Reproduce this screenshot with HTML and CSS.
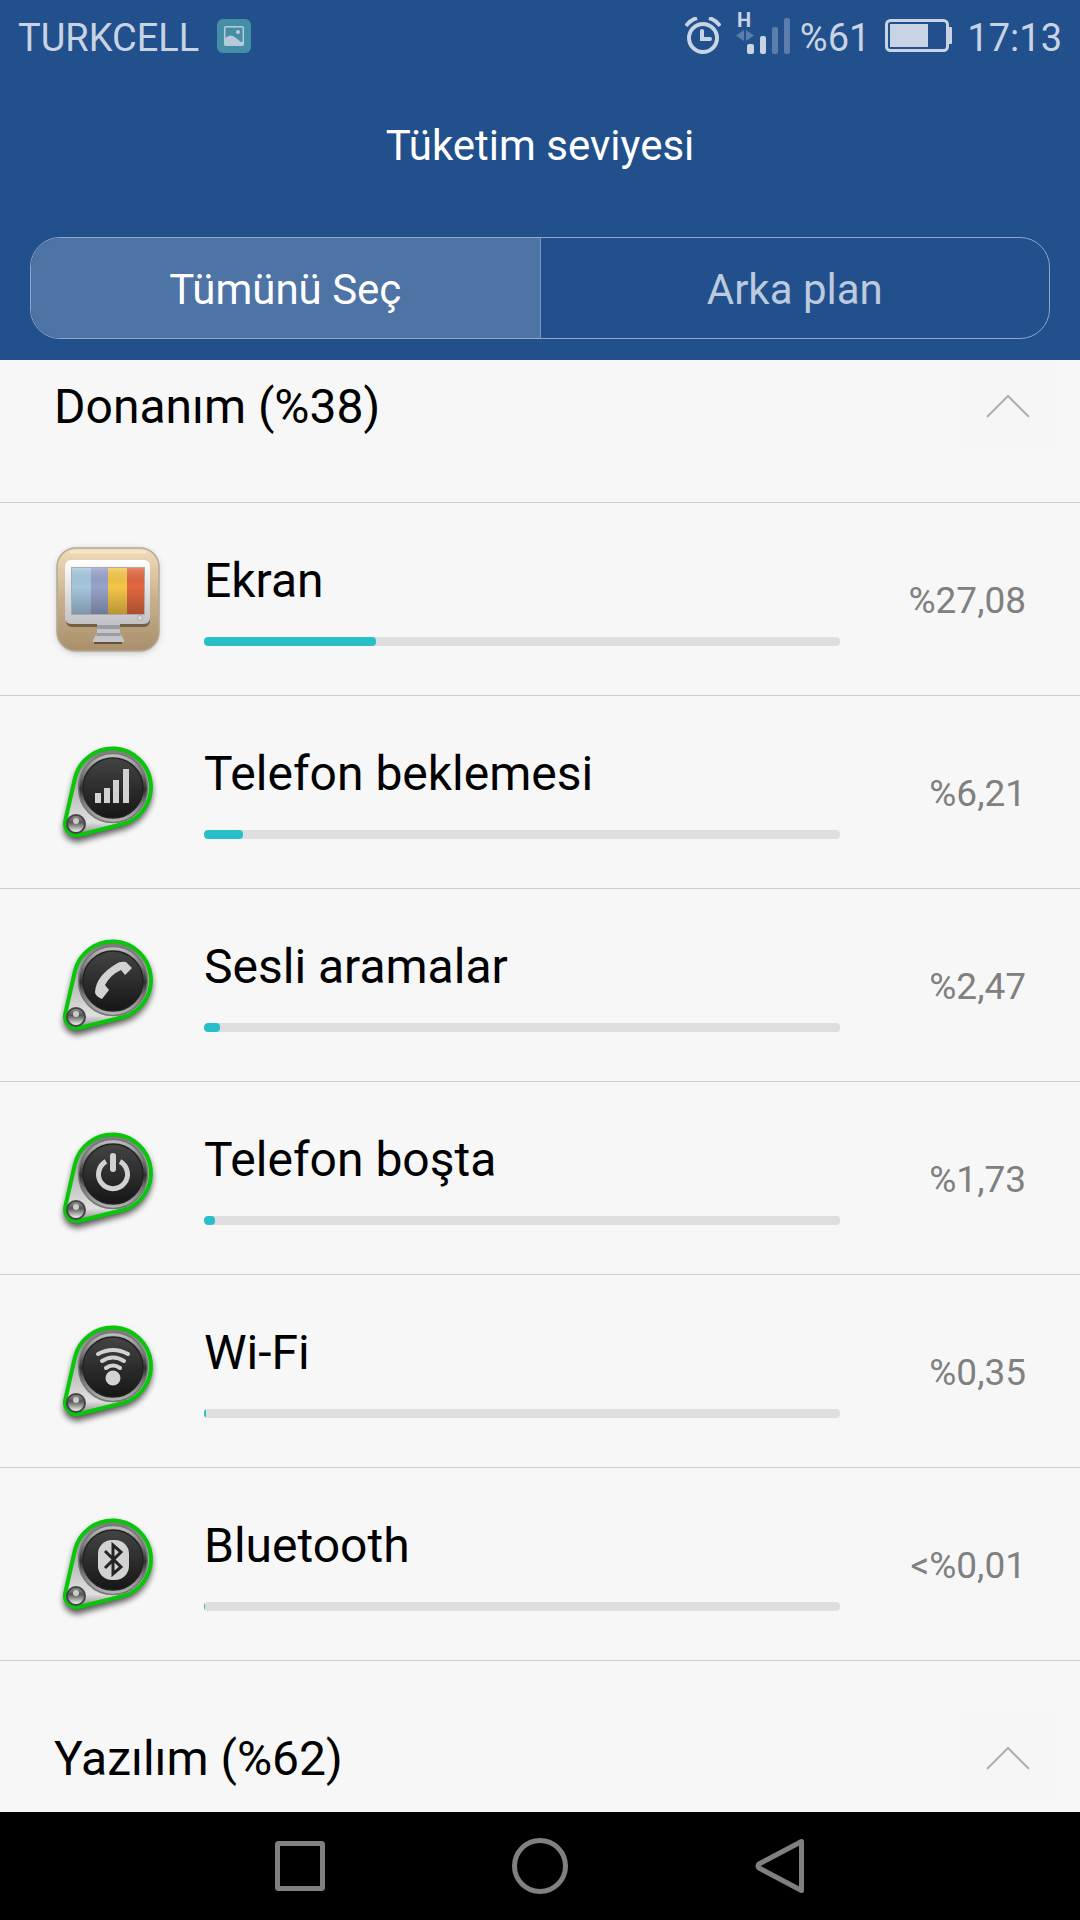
FILE: index.html
```html
<!DOCTYPE html>
<html lang="tr">
<head>
    <meta charset="UTF-8">
    <title>Tüketim seviyesi</title>
    <link rel="stylesheet" href="styles.css">
</head>
<body>
<!-- shared gradients and the badge base -->
<svg class="defs" width="0" height="0" aria-hidden="true">
    <defs>
        <linearGradient id="plate" x1="0" y1="0" x2="0" y2="1">
            <stop offset="0" stop-color="#777"/>
            <stop offset=".5" stop-color="#bbb"/>
            <stop offset=".85" stop-color="#e0e0e0"/>
            <stop offset="1" stop-color="#888"/>
        </linearGradient>
        <linearGradient id="ring" x1="0" y1="0" x2="0" y2="1">
            <stop offset="0" stop-color="#c4c4c4"/>
            <stop offset=".3" stop-color="#777"/>
            <stop offset=".52" stop-color="#303030"/>
            <stop offset=".7" stop-color="#777"/>
            <stop offset="1" stop-color="#b8b8b8"/>
        </linearGradient>
        <linearGradient id="dial" x1="0" y1="0" x2="0" y2="1">
            <stop offset="0" stop-color="#444"/>
            <stop offset="1" stop-color="#161616"/>
        </linearGradient>
        <linearGradient id="rivet" x1="0" y1="0" x2="0" y2="1">
            <stop offset="0" stop-color="#999"/>
            <stop offset=".4" stop-color="#555"/>
            <stop offset="1" stop-color="#fff"/>
        </linearGradient>
        <linearGradient id="wood" x1="0" y1="0" x2="0" y2="1">
            <stop offset="0" stop-color="#f0ddbd"/>
            <stop offset=".5" stop-color="#c8b08c"/>
            <stop offset="1" stop-color="#a98f6b"/>
        </linearGradient>
        <linearGradient id="metal" x1="0" y1="0" x2="0" y2="1">
            <stop offset="0" stop-color="#fff"/>
            <stop offset="1" stop-color="#c2c2c6"/>
        </linearGradient>
        <linearGradient id="shade" x1="0" y1="0" x2="0" y2="1">
            <stop offset="0" stop-color="#fff" stop-opacity=".2"/>
            <stop offset=".4" stop-color="#000" stop-opacity="0"/>
            <stop offset="1" stop-color="#000" stop-opacity=".25"/>
        </linearGradient>
        <filter id="soft" x="-20%" y="-20%" width="140%" height="140%">
            <feGaussianBlur stdDeviation="3"/>
        </filter>
        <symbol id="badge" viewBox="0 0 120 120">
            <path d="M75 92L31 104A12 12 0 0 1 17 91L27 46A38.500 38.500 0 1 1 75 92Z" transform="translate(0 4)" fill="#000" stroke="#000" stroke-width="3" opacity=".65" filter="url(#soft)"/>
            <path d="M75 92L31 103A12 12 0 0 1 17 90L27 46A38.500 38.500 0 1 1 75 92Z" fill="url(#plate)" stroke="#08c60a" stroke-width="4"/>
            <circle cx="65" cy="56" r="34.500" fill="url(#ring)" stroke="#777" stroke-width="1.500"/>
            <circle cx="65" cy="56" r="30" fill="url(#dial)" stroke="#222" stroke-width="1.500"/>
            <circle cx="28" cy="92" r="9" fill="url(#rivet)" stroke="#444" stroke-width="2"/>
            <circle cx="28" cy="89" r="3" fill="#ccc"/>
        </symbol>
    </defs>
</svg>

<header class="header">
    <div class="status">
        <span>TURKCELL</span>
        <svg class="picture" width="34" height="34" viewBox="0 0 34 34">
            <rect width="34" height="34" rx="6" fill="#458fa6"/>
            <rect x="7.700" y="7.700" width="18.600" height="18.600" rx="1" fill="none" stroke="#b8c9dc" stroke-width="1.500"/>
            <path d="M8 19q6-5 11 0l5 4h2v3H8z" fill="#b8c9dc"/>
            <circle cx="21" cy="13" r="2" fill="#b8c9dc"/>
        </svg>
        <svg class="alarm" width="36" height="38" viewBox="0 0 36 38">
            <g fill="none" stroke="#c8d3e3" stroke-width="4">
                <circle cx="18" cy="21" r="14"/>
                <path d="M1 9Q5 3 12 1M35 9Q31 3 24 1"/>
                <path d="M17 14v8h8" stroke-linecap="round"/>
            </g>
        </svg>
        <svg class="signal" width="55" height="60" viewBox="0 -6 55 60">
            <text x="1" y="15" class="net">H</text>
            <path d="M8 18v11L0 23.500zM10 18v11l8-5.500z" fill="#5b7eac"/>
            <rect x="11" y="32" width="7" height="10" rx="2" fill="#c8d3e3"/>
            <rect x="24" y="24" width="6" height="18" rx="2" fill="#c8d3e3"/>
            <rect x="36" y="15" width="6" height="27" rx="2" fill="#5b7eac"/>
            <rect x="48" y="6" width="6" height="36" rx="2" fill="#5b7eac"/>
        </svg>
        <span>%61</span>
        <svg class="battery" width="68" height="34" viewBox="0 0 68 34">
            <rect x="1.500" y="1.500" width="61" height="30" rx="4" fill="none" stroke="#c8d3e3" stroke-width="3"/>
            <rect x="5" y="5" width="38" height="23" fill="#c8d3e3"/>
            <rect x="63" y="8" width="4" height="17" rx="1" fill="#c8d3e3"/>
        </svg>
        <span>17:13</span>
    </div>
    <h1 class="title">Tüketim seviyesi</h1>
    <div class="tabs">
        <button class="tab current" type="button">Tümünü Seç</button>
        <button class="tab" type="button">Arka plan</button>
    </div>
</header>

<main class="content">
    <div class="list">
        <div class="group">
            <h2>Donanım (%38)</h2>
            <button class="toggle" type="button" aria-label="Donanım">
                <svg width="44" height="24" viewBox="0 0 44 24"><path d="M1 23L22 2l21 21"/></svg>
            </button>
        </div>
        <ul>
            <li class="row">
                <svg class="icon" viewBox="0 0 120 120">
                    <rect x="9" y="10" width="102" height="104" rx="20" fill="#777" filter="url(#soft)" opacity=".4"/>
                    <rect x="9" y="9" width="102" height="103" rx="19" fill="url(#wood)" stroke="#b3a997" stroke-width="1.500"/>
                    <path d="M22 13h76" stroke="#fff2d5" stroke-width="3" opacity=".6"/>
                    <rect x="18" y="24" width="84" height="64" rx="6" fill="#443520" opacity=".6"/>
                    <path d="M46 101h28v4H46z" fill="#443520" opacity=".7"/>
                    <path d="M49 82h23v12l4 7v2H45v-2l4-7z" fill="#c4c5c8"/>
                    <path d="M49 86h23v4H49zM49 94h23l1 3H48z" fill="#9c9da0"/>
                    <rect x="17" y="21" width="85" height="64" rx="6" fill="url(#metal)"/>
                    <rect x="23" y="28" width="74" height="48" fill="#aaa"/>
                    <rect x="24" y="29" width="19" height="46" fill="#a5c8df"/>
                    <rect x="43" y="29" width="17" height="46" fill="#98a3cb"/>
                    <rect x="60" y="29" width="19" height="46" fill="#f5c649"/>
                    <rect x="79" y="29" width="17" height="46" fill="#e2683f"/>
                    <rect x="24" y="29" width="72" height="46" fill="url(#shade)"/>
                    <circle cx="92" cy="79" r="2.500" fill="#ddd" stroke="#aaa"/>
                </svg>
                <div class="info">
                    <h3>Ekran</h3>
                    <div class="bar"><div class="fill" style="width: 27.08%"></div></div>
                </div>
                <span class="value">%27,08</span>
            </li>
            <li class="row">
                <svg class="icon" viewBox="0 0 120 120">
                    <use href="#badge"/>
                    <path d="M47 61h6v10h-6zM56 56h6v15h-6zM65 48h6v23h-6zM75 37h6v34h-6z" fill="#d2d2d2"/>
                </svg>
                <div class="info">
                    <h3>Telefon beklemesi</h3>
                    <div class="bar"><div class="fill" style="width: 6.21%"></div></div>
                </div>
                <span class="value">%6,21</span>
            </li>
            <li class="row">
                <svg class="icon" viewBox="0 0 120 120">
                    <use href="#badge"/>
                    <path d="M47 67Q47 71 54 74L61 65L57 60Q62 50 73 45L77 50L84 43L78 37Q72 36 68 39Q48 51 47 67Z" fill="#d2d2d2"/>
                </svg>
                <div class="info">
                    <h3>Sesli aramalar</h3>
                    <div class="bar"><div class="fill" style="width: 2.47%"></div></div>
                </div>
                <span class="value">%2,47</span>
            </li>
            <li class="row">
                <svg class="icon" viewBox="0 0 120 120">
                    <use href="#badge"/>
                    <path d="M58 43.500A14.500 14.500 0 1 0 72 43.500" fill="none" stroke="#d2d2d2" stroke-width="5"/>
                    <path d="M65 38v13" stroke="#d2d2d2" stroke-width="6" stroke-linecap="round"/>
                </svg>
                <div class="info">
                    <h3>Telefon boşta</h3>
                    <div class="bar"><div class="fill" style="width: 1.73%"></div></div>
                </div>
                <span class="value">%1,73</span>
            </li>
            <li class="row">
                <svg class="icon" viewBox="0 0 120 120">
                    <use href="#badge"/>
                    <circle cx="65" cy="67" r="7.500" fill="#d2d2d2"/>
                    <path d="M50 43Q65 35 80 43M54 50Q65 43 76 50M58 57Q65 52 72 57" fill="none" stroke="#d2d2d2" stroke-width="4" stroke-linecap="round"/>
                </svg>
                <div class="info">
                    <h3>Wi-Fi</h3>
                    <div class="bar"><div class="fill" style="width: 0.35%"></div></div>
                </div>
                <span class="value">%0,35</span>
            </li>
            <li class="row">
                <svg class="icon" viewBox="0 0 120 120">
                    <use href="#badge"/>
                    <rect x="50" y="36" width="31" height="40" rx="14" fill="#d2d2d2"/>
                    <path d="M57 47L73 63L65 70V41L73 48L57 64" fill="none" stroke="#252525" stroke-width="3"/>
                </svg>
                <div class="info">
                    <h3>Bluetooth</h3>
                    <div class="bar"><div class="fill" style="width: 0.1%"></div></div>
                </div>
                <span class="value">&lt;%0,01</span>
            </li>
        </ul>
        <div class="group">
            <h2>Yazılım (%62)</h2>
            <button class="toggle" type="button" aria-label="Yazılım">
                <svg width="44" height="24" viewBox="0 0 44 24"><path d="M1 23L22 2l21 21"/></svg>
            </button>
        </div>
    </div>
</main>

<nav class="nav">
    <button type="button" aria-label="Son uygulamalar">
        <svg width="60" height="60" viewBox="0 0 60 60"><rect x="7.500" y="7.500" width="45" height="45" rx="1"/></svg>
    </button>
    <button type="button" aria-label="Ana ekran">
        <svg width="60" height="60" viewBox="0 0 60 60"><circle cx="30" cy="30" r="25.500"/></svg>
    </button>
    <button type="button" aria-label="Geri">
        <svg width="60" height="60" viewBox="0 0 60 60"><path d="M51.500 5.500v49L9 32q-2-2 0-4z"/></svg>
    </button>
</nav>
</body>
</html>
```
FILE: styles.css
```css
* {
    margin: 0;
    padding: 0;
    box-sizing: border-box;
}

body {
    display: flex;
    flex-direction: column;
    height: 100vh;
    font-family: Roboto, "Noto Sans", sans-serif;
    background-color: #f7f7f7;
    color: #000;
}

svg {
    display: block;
    flex: none;
}

.defs {
    position: absolute;
}

button {
    border: none;
    background: none;
    font-family: inherit;
    cursor: pointer;
}

h1, h2, h3 {
    font-weight: normal;
}

.header {
    flex: none;
    padding-bottom: 21px;
    background-color: #21508d;
}

/* status bar */
.status {
    display: flex;
    align-items: center;
    height: 72px;
    padding: 0 18px;
    font-size: 38px;
    line-height: 48px;
    color: #c8d3e3;
}

.status span {
    padding-top: 4px;
}

.picture {
    margin-left: 18px;
}

.alarm {
    margin-left: auto;
}

.signal {
    margin: 0 9px 0 15px;
}

.net {
    font-size: 20px;
    font-weight: bold;
    fill: #c8d3e3;
}

.battery {
    margin: 0 14px 0 15px;
}

.title {
    font-size: 42px;
    line-height: 148px;
    text-align: center;
    color: #fff;
}

.tabs {
    display: flex;
    height: 102px;
    margin: 17px 30px 0;
    border: 1px solid #8fa7c6;
    border-radius: 30px;
    overflow: hidden;
}

.tab {
    flex: 1;
    padding-top: 2px;
    font-size: 42px;
    color: #bccadd;
}

.tab.current {
    background-color: #4e73a5;
    border-right: 1px solid #7b97bc;
    color: #fff;
}

/* list */
.content {
    flex: 1;
    min-height: 0;
    overflow: hidden;
}

/* slightly scrolled */
.list {
    margin-top: -51px;
}

.group {
    display: flex;
    align-items: center;
    justify-content: space-between;
    height: 194px;
    padding: 0 24px 0 54px;
    border-bottom: 1px solid #d0d0d0;
}

.group h2, .info h3 {
    font-size: 48px;
    line-height: 56px;
}

.group h2 {
    padding-top: 2px;
}

.toggle {
    display: flex;
    align-items: center;
    justify-content: center;
    width: 96px;
    height: 96px;
    background-color: #f6f6f6;
}

.toggle path {
    fill: none;
    stroke: #b0b0b0;
    stroke-width: 2;
}

ul {
    list-style: none;
}

.row {
    display: flex;
    align-items: center;
    height: 193px;
    padding: 0 54px 0 48px;
    border-bottom: 1px solid #d0d0d0;
}

.icon {
    width: 120px;
    height: 120px;
    margin-right: 36px;
}

.info {
    flex: 1;
}

.bar {
    height: 9px;
    margin-top: 28px;
    border-radius: 4px;
    background-color: #dedede;
    overflow: hidden;
}

.fill {
    height: 9px;
    min-width: 1px;
    border-radius: 4px;
    background-color: #29bfc8;
}

.value {
    width: 186px;
    padding-top: 4px;
    font-size: 37px;
    line-height: 48px;
    text-align: right;
    color: #808080;
}

.nav {
    display: flex;
    flex: none;
    justify-content: center;
    height: 108px;
    background-color: #000;
}

.nav button {
    display: flex;
    align-items: center;
    justify-content: center;
    width: 240px;
}

.nav svg {
    fill: none;
    stroke: #808080;
    stroke-width: 5;
    stroke-linejoin: round;
}
```
